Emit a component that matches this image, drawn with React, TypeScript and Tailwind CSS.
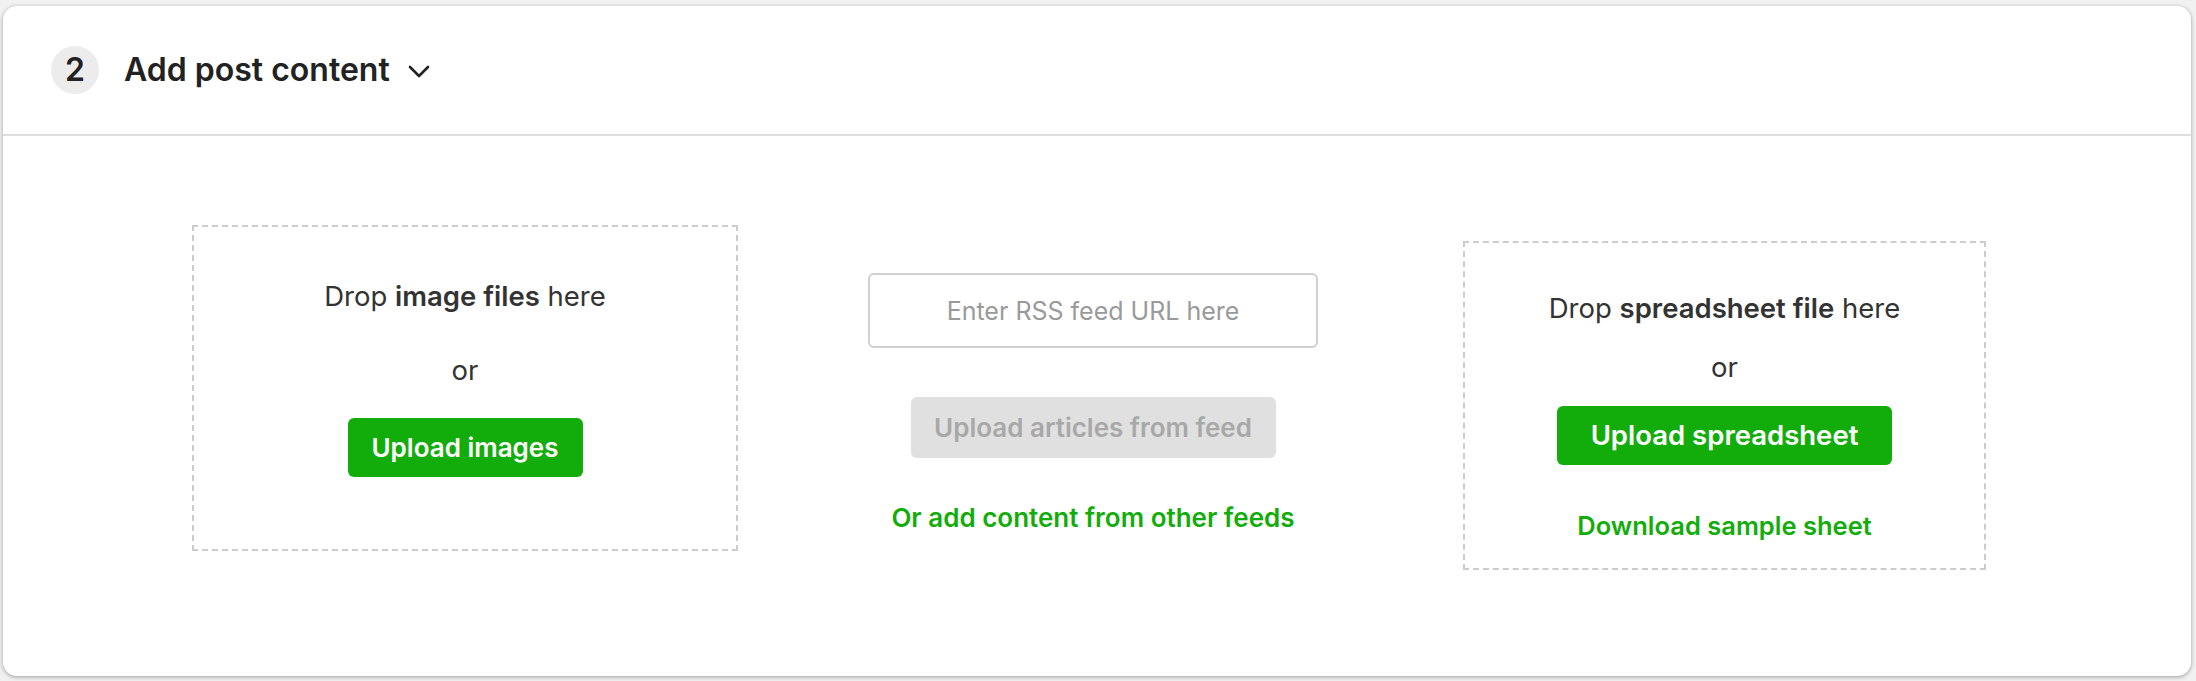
const font = { fontFamily: "Inter, 'Noto Sans', sans-serif" };

const green = "bg-[#13ad0b]";

export default function App() {
  return (
    <div className="h-[681px] w-[2196px] bg-[#f1f1f1] pt-[6px] pl-[3px]" style={font}>
      <div className="h-[670px] w-[2188px] overflow-hidden rounded-[14px] bg-white shadow-[0_1px_4px_rgba(0,0,0,0.35)]">
        {/* header */}
        <div className="flex h-[130px] items-center border-b-2 border-[#dedede] pl-[48px]">
          <div className="flex h-[48px] w-[48px] items-center justify-center rounded-full bg-[#ececec] text-[32px] font-semibold text-[#222]">
            2
          </div>
          <h2 className="ml-[25px] text-[32px] font-semibold text-[#222]">Add post content</h2>
          <svg width="22" height="13" viewBox="0 0 22 13" className="ml-[18px] mt-[2px]">
            <polyline
              points="2,2 11,11 20,2"
              fill="none"
              stroke="#222"
              strokeWidth="2.6"
              strokeLinecap="round"
              strokeLinejoin="round"
            />
          </svg>
        </div>

        {/* body */}
        <div className="flex h-[540px] items-start pl-[189px]">
          {/* images drop zone */}
          <div className="mt-[89px] flex h-[326px] w-[546px] flex-col items-center border-2 border-dashed border-[#cccccc] pt-[52px]">
            <p className="text-[27.5px] leading-[34px] text-[#333]">
              Drop <span className="font-semibold">image files</span> here
            </p>
            <p className="mt-[40px] text-[27.5px] leading-[34px] text-[#333]">or</p>
            <button
              className={`mt-[31px] h-[59px] w-[235px] rounded-[6px] ${green} text-[26px] font-semibold text-white`}
            >
              Upload images
            </button>
          </div>

          {/* rss feed */}
          <div className="ml-[130px] mt-[137px] flex w-[450px] flex-col items-center">
            <input
              placeholder="Enter RSS feed URL here"
              className="h-[75px] w-[450px] rounded-[6px] border-2 border-[#d0d0d0] text-center text-[25px] text-[#333] outline-none placeholder:text-[#9a9a9a]"
            />
            <button className="mt-[49px] h-[61px] w-[365px] rounded-[6px] bg-[#e0e0e0] text-[26px] font-semibold text-[#a8a8a8]">
              Upload articles from feed
            </button>
            <a className="mt-[44px] text-[26px] font-semibold leading-[32px] text-[#13ad0b]">
              Or add content from other feeds
            </a>
          </div>

          {/* spreadsheet drop zone */}
          <div className="ml-[145px] mt-[105px] flex h-[329px] w-[523px] flex-col items-center border-2 border-dashed border-[#cccccc] pt-[48px]">
            <p className="text-[27.5px] leading-[34px] text-[#333]">
              Drop <span className="font-semibold">spreadsheet file</span> here
            </p>
            <p className="mt-[25px] text-[27.5px] leading-[34px] text-[#333]">or</p>
            <button
              className={`mt-[22px] h-[59px] w-[335px] rounded-[6px] ${green} text-[27.5px] font-semibold text-white`}
            >
              Upload spreadsheet
            </button>
            <a className="mt-[45px] text-[25.5px] font-semibold leading-[32px] text-[#13ad0b]">
              Download sample sheet
            </a>
          </div>
        </div>
      </div>
    </div>
  );
}
